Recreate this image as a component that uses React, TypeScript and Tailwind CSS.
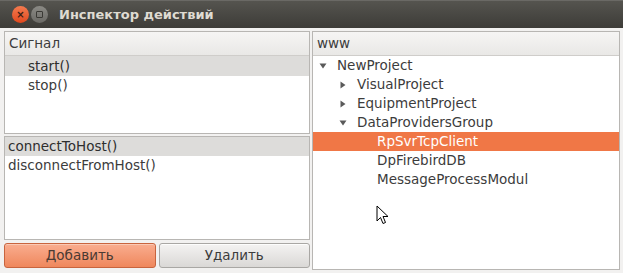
import React from "react";

const FONT = { fontFamily: '"DejaVu Sans", "Open Sans", sans-serif' };

function Arrow({ open }: { open: boolean }) {
  return (
    <svg width="8" height="8" viewBox="0 0 8 8" className="shrink-0">
      {open ? <path d="M0.5 1.5 L7.5 1.5 L4 6.5 Z" fill="#5a5a5a" /> : <path d="M1.5 0.5 L6.5 4 L1.5 7.5 Z" fill="#5a5a5a" />}
    </svg>
  );
}

type Node = { label: string; depth: number; arrow?: "open" | "closed"; selected?: boolean };

const tree: Node[] = [
  { label: "NewProject", depth: 0, arrow: "open" },
  { label: "VisualProject", depth: 1, arrow: "closed" },
  { label: "EquipmentProject", depth: 1, arrow: "closed" },
  { label: "DataProvidersGroup", depth: 1, arrow: "open" },
  { label: "RpSvrTcpClient", depth: 2, selected: true },
  { label: "DpFirebirdDB", depth: 2 },
  { label: "MessageProcessModul", depth: 2 },
];

export default function App() {
  return (
    <div className="w-[623px] h-[273px] bg-[#f2f1f0] flex flex-col overflow-hidden text-[13.5px] text-[#3c3c3c]" style={FONT}>
      {/* title bar */}
      <div className="h-[28px] shrink-0 flex items-center bg-gradient-to-b from-[#55544f] to-[#3d3c38] border-t border-[#6a6965] px-[12px]">
        <div className="w-[17px] h-[17px] rounded-full bg-gradient-to-b from-[#f37a4e] to-[#e0471c] flex items-center justify-center text-[#3a2015] text-[10px] font-bold leading-none">
          ×
        </div>
        <div className="w-[17px] h-[17px] rounded-full bg-gradient-to-b from-[#8b8a85] to-[#6b6a66] ml-[2px] flex items-center justify-center">
          <div className="w-[7px] h-[7px] border border-[#3a3935] rounded-[1px]" />
        </div>
        <span className="ml-[11px] text-[13px] font-bold text-[#dfdbd2]">Инспектор действий</span>
      </div>

      {/* body */}
      <div className="flex-1 flex gap-[2px] pl-[4px] pt-[3px] pr-[3px] pb-[3px]">
        {/* left column */}
        <div className="w-[306px] flex flex-col">
          <div className="h-[103px] border border-[#b8b6b3] bg-white flex flex-col">
            <div className="h-[24px] shrink-0 flex items-center px-[4px] bg-gradient-to-b from-[#f6f5f4] to-[#e9e8e6] border-b border-[#cfcdca]">
              Сигнал
            </div>
            <div className="h-[20px] flex items-center pl-[23px] bg-[#dddcda] text-[#2e2e2e]">start()</div>
            <div className="h-[19px] flex items-center pl-[23px]">stop()</div>
          </div>
          <div className="h-[104px] mt-[2px] border border-[#b8b6b3] bg-white flex flex-col">
            <div className="h-[19px] flex items-center pl-[3px] bg-[#dddcda] text-[#2e2e2e]">connectToHost()</div>
            <div className="h-[19px] flex items-center pl-[3px]">disconnectFromHost()</div>
          </div>
          <div className="flex gap-[3px] mt-[3px] h-[25px]">
            <button className="flex-1 rounded-[3px] border border-[#c8643e] bg-gradient-to-b from-[#f9ad8f] to-[#ef875c] text-[#4a3a33] text-[13.5px] shadow-[inset_0_1px_0_rgba(255,255,255,0.35)]">
              Добавить
            </button>
            <button className="flex-1 rounded-[3px] border border-[#a9a7a4] bg-gradient-to-b from-[#f4f3f2] to-[#dad8d6] text-[#3c3c3c] text-[13.5px] shadow-[inset_0_1px_0_rgba(255,255,255,0.8)]">
              Удалить
            </button>
          </div>
        </div>

        {/* right column */}
        <div className="flex-1 border border-[#b8b6b3] bg-white flex flex-col relative">
          <div className="h-[24px] shrink-0 flex items-center px-[4px] bg-gradient-to-b from-[#f6f5f4] to-[#e9e8e6] border-b border-[#cfcdca]">
            www
          </div>
          <div>
            {tree.map((n) => (
              <div
                key={n.label}
                className={
                  "h-[19px] flex items-center " + (n.selected ? "bg-[#f07746] text-white" : "")
                }
                style={{ paddingLeft: 6 + n.depth * 20 }}
              >
                <div className="w-[18px] flex items-center">{n.arrow ? <Arrow open={n.arrow === "open"} /> : null}</div>
                <span>{n.label}</span>
              </div>
            ))}
          </div>
          {/* mouse pointer */}
          <svg className="absolute left-[63px] top-[173px]" width="13" height="20" viewBox="0 0 13 20">
            <path d="M1 1 L1 16 L4.5 12.5 L7 18.5 L9.5 17.5 L7 11.5 L12 11.5 Z" fill="#ffffff" stroke="#000000" strokeWidth="1" strokeLinejoin="round" />
          </svg>
        </div>
      </div>
    </div>
  );
}
